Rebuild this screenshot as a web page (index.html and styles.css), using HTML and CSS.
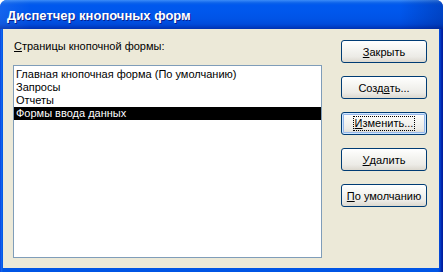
FILE: index.html
```html
<!DOCTYPE html>
<html lang="ru">
<head>
<meta charset="utf-8">
<link rel="stylesheet" href="styles.css">
</head>
<body>
<div class="window">
  <div class="titlebar"><span class="title">Диспетчер кнопочных форм</span></div>
  <div class="client">
    <div class="left">
      <div class="label"><u>С</u>траницы кнопочной формы:</div>
      <div class="listbox">
        <div class="item">Главная кнопочная форма (По умолчанию)</div>
        <div class="item">Запросы</div>
        <div class="item">Отчеты</div>
        <div class="item selected">Формы ввода данных</div>
      </div>
    </div>
    <div class="buttons">
      <button class="btn"><u>З</u>акрыть</button>
      <button class="btn">Созд<u>а</u>ть...</button>
      <button class="btn focused"><span class="focusrect"><u>И</u>зменить...</span></button>
      <button class="btn"><u>У</u>далить</button>
      <button class="btn"><u>П</u>о умолчанию</button>
    </div>
  </div>
</div>
</body>
</html>
```
FILE: styles.css
```css
html, body {
  margin: 0;
  padding: 0;
  background: #ffffff;
}
body {
  width: 443px;
  height: 272px;
  overflow: hidden;
  font-family: "Liberation Sans", Arial, sans-serif;
  font-size: 11px;
}
.window {
  width: 443px;
  height: 272px;
  box-sizing: border-box;
  display: flex;
  flex-direction: column;
  background: linear-gradient(to right, #0831D9 0px, #166AEE 1px, #0055E5 3px, #0055E5 438px, #0542D0 440px, #001EA0 442px);
  border-radius: 7px 7px 0 0;
  overflow: hidden;
}
.titlebar {
  height: 29px;
  flex: none;
  display: flex;
  align-items: center;
  padding-left: 7px;
  background:
    linear-gradient(to right, rgba(255,255,255,0.08) 0px, rgba(255,255,255,0) 30px, rgba(0,0,0,0) 400px, rgba(0,10,80,0.25) 443px),
    linear-gradient(to bottom, #3D8DF7 0px, #2A7CF4 1px, #0C62EA 3px, #0058EE 5px, #0057EC 12px, #0053E6 19px, #004BDB 24px, #0042CC 26px, #0036BA 28px, #0032B0 29px);
}
.title {
  font-family: "Liberation Sans", Arial, sans-serif;
  font-weight: bold;
  font-size: 13px;
  color: #ffffff;
  text-shadow: 1px 1px 0 #0A1E8C;
  margin-top: 1px;
}
.client {
  flex: 1;
  margin: 0 4px 4px 3px;
  background: #ECE9D8;
  display: flex;
  padding: 11px 0 0 10px;
}
.left {
  display: flex;
  flex-direction: column;
  width: 309px;
}
.label {
  height: 13px;
  line-height: 13px;
  padding-left: 1px;
  color: #000;
}
.listbox {
  margin-top: 12px;
  height: 193px;
  box-sizing: border-box;
  border: 1px solid #7F9DB9;
  background: #ffffff;
  padding: 2px 0 0 0;
}
.item {
  height: 13px;
  line-height: 13px;
  padding-left: 2px;
  color: #000;
  white-space: nowrap;
}
.item.selected {
  background: #000000;
  color: #ffffff;
}
.buttons {
  display: flex;
  flex-direction: column;
  gap: 13px;
  margin-left: 19px;
}
.btn {
  width: 86px;
  height: 23px;
  box-sizing: border-box;
  border: 1px solid #003C74;
  border-radius: 3px;
  background: linear-gradient(to bottom, #FFFFFF 0%, #F7F7F4 30%, #ECEBE6 75%, #DCD8CF 100%);
  font-family: "Liberation Sans", Arial, sans-serif;
  font-size: 11px;
  color: #000;
  padding: 0;
  display: flex;
  align-items: center;
  justify-content: center;
}
.btn u {
  text-decoration-thickness: 1px;
  text-underline-offset: 1px;
}
.btn.focused {
  box-shadow: inset 0 0 0 1px #CEE7FF, inset 0 0 0 2px #98B8EA;
}
.focusrect {
  outline: 1px dotted #000;
  padding: 0 1px;
  line-height: 13px;
}
```
